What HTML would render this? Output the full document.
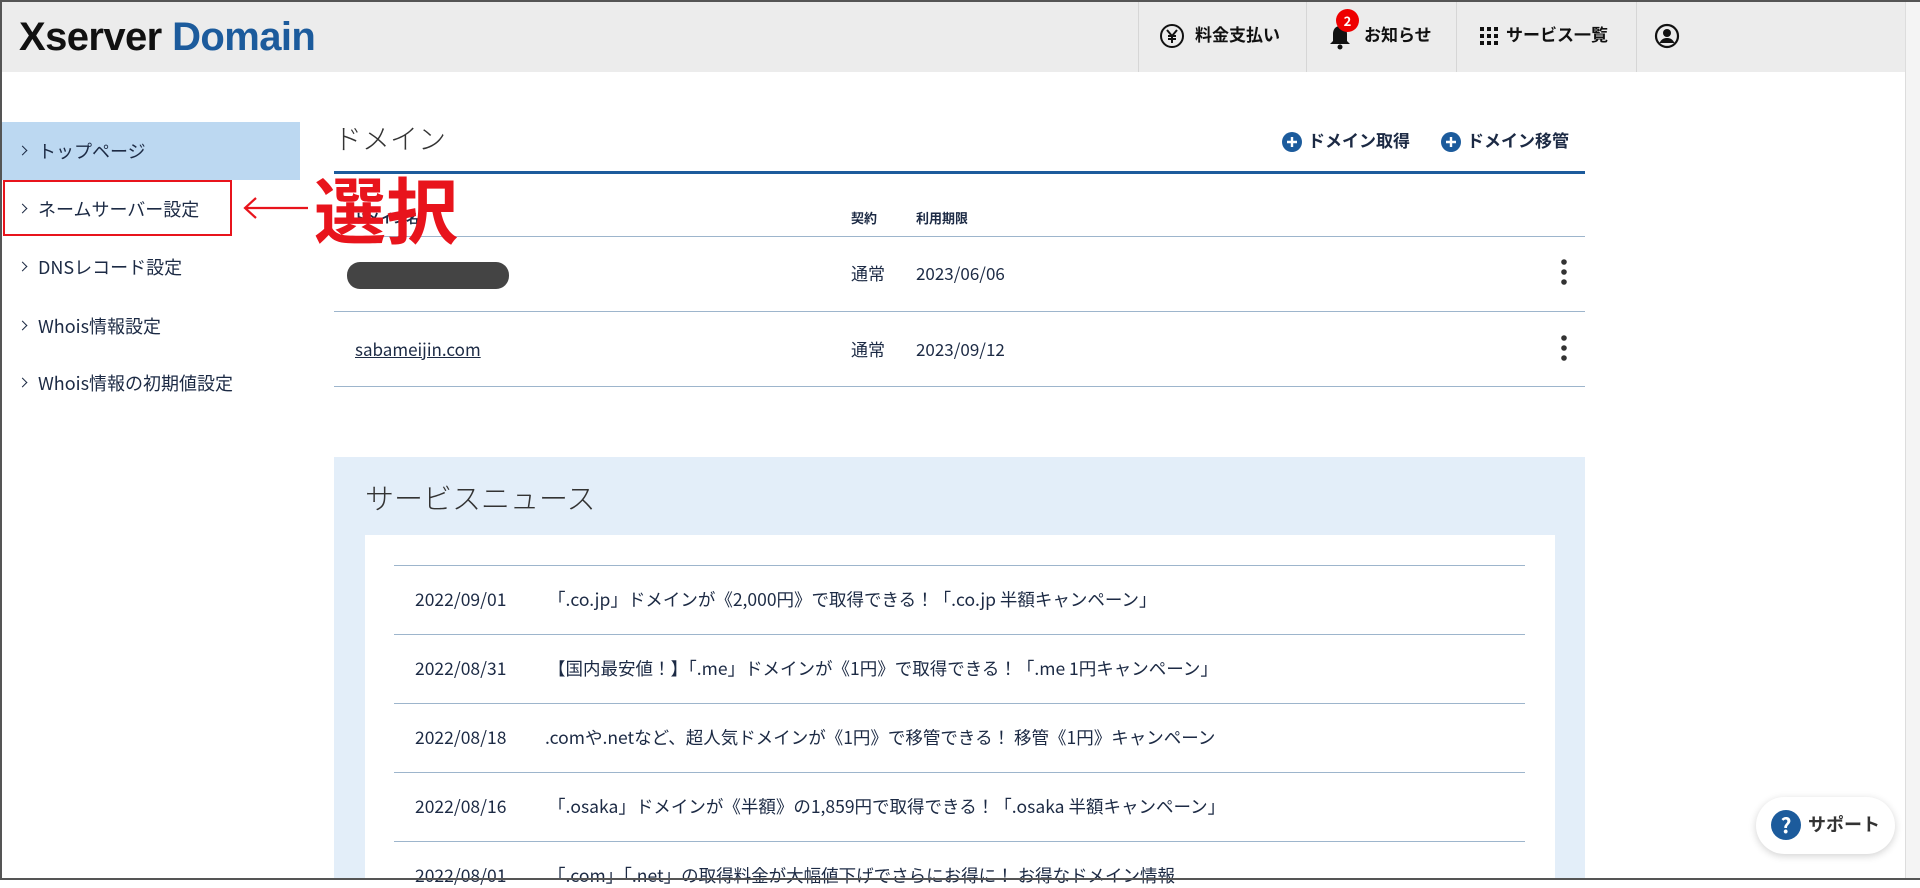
<!DOCTYPE html>
<html><head><meta charset="utf-8"><style>
*{margin:0;padding:0;box-sizing:border-box}
body{width:1920px;height:880px;overflow:hidden;background:#fff;font-family:"Noto Sans CJK JP","Liberation Sans",sans-serif;line-height:1.2;color:#1c2a44;position:relative}
.frame{position:absolute;left:0;top:0;width:1920px;height:880px;border:2px solid #555;border-right:none;pointer-events:none;z-index:50}
.hdr{position:absolute;left:0;top:0;width:1905px;height:72px;background:#ececec}
.logo{position:absolute;left:19px;top:13px;font-family:"Liberation Sans",sans-serif;font-size:40px;font-weight:bold;letter-spacing:-0.6px;color:#111;line-height:1.2}
.logo span{color:#1c5b9c}
.sep{position:absolute;top:0;width:1px;height:72px;background:#d6d6d6}
.nav{position:absolute;top:24px;font-size:17px;font-weight:bold;color:#111}
.scroll{position:absolute;left:1905px;top:0;width:15px;height:880px;background:#f4f4f4;border-left:1px solid #ddd}
.side{position:absolute;left:0;width:300px;height:58px;font-size:18px;line-height:58px;padding-left:38px;color:#1c2a44}
.side:before{content:"";position:absolute;left:19px;top:25px;width:6px;height:6px;border-right:1.5px solid #1c2a44;border-top:1.5px solid #1c2a44;transform:rotate(45deg)}
.abs{position:absolute}
.hline{position:absolute;height:1px;background:#9db5cc}
.news{position:absolute;font-size:17.5px;white-space:nowrap}
</style></head><body>
<div class="frame"></div>
<div class="hdr">
 <div class="logo">Xserver <span>Domain</span></div>
 <div class="sep" style="left:1138px"></div><div class="sep" style="left:1306px"></div><div class="sep" style="left:1456px"></div><div class="sep" style="left:1636px"></div>
 <svg class="abs" style="left:1159px;top:23px" width="26" height="26" viewBox="0 0 26 26"><circle cx="13" cy="13" r="11" fill="none" stroke="#111" stroke-width="2"/><path d="M8 7l5 6 5-6M13 13v7M9 13h8M9 16h8" stroke="#111" stroke-width="2" fill="none"/></svg>
 <div class="nav" style="left:1195px">料金支払い</div>
 <svg class="abs" style="left:1329px;top:24px" width="22" height="26" viewBox="0 0 22 26"><path d="M11 2c-5 0-7 4-7 8v7l-3 3h20l-3-3v-7c0-4-2-8-7-8z" fill="#111"/><circle cx="11" cy="23" r="2.5" fill="#111"/></svg>
 <div class="abs" style="left:1336px;top:9px;width:23px;height:23px;border-radius:50%;background:#e00;color:#fff;font-size:13px;font-weight:bold;text-align:center;line-height:23px">2</div>
 <div class="nav" style="left:1364px">お知らせ</div>
 <svg class="abs" style="left:1480px;top:27px" width="18" height="18" viewBox="0 0 18 18" fill="#111"><rect x="0" y="0" width="4" height="4"/><rect x="7" y="0" width="4" height="4"/><rect x="14" y="0" width="4" height="4"/><rect x="0" y="7" width="4" height="4"/><rect x="7" y="7" width="4" height="4"/><rect x="14" y="7" width="4" height="4"/><rect x="0" y="14" width="4" height="4"/><rect x="7" y="14" width="4" height="4"/><rect x="14" y="14" width="4" height="4"/></svg>
 <div class="nav" style="left:1506px">サービス一覧</div>
 <svg class="abs" style="left:1654px;top:23px" width="26" height="26" viewBox="0 0 26 26"><circle cx="13" cy="13" r="11" fill="none" stroke="#111" stroke-width="2.2"/><circle cx="13" cy="10" r="4" fill="#111"/><path d="M5.5 20c2-4 4.5-5 7.5-5s5.5 1 7.5 5" fill="#111"/></svg>
</div>
<div class="scroll"></div>

<div class="side" style="top:122px;background:#bcd8f1">トップページ</div>
<div class="side" style="top:180px">ネームサーバー設定</div>
<div class="side" style="top:238px">DNSレコード設定</div>
<div class="side" style="top:297px">Whois情報設定</div>
<div class="side" style="top:354px">Whois情報の初期値設定</div>
<div class="abs" style="left:3px;top:180px;width:229px;height:56px;border:2px solid #e8141c"></div>
<svg class="abs" style="left:242px;top:196px" width="66" height="24" viewBox="0 0 66 24"><path d="M66 12H4M14 2L3 12l11 10" stroke="#e8141c" stroke-width="2.2" fill="none"/></svg>
<div class="abs" style="left:314px;top:164px;font-size:72px;font-weight:bold;color:#e8141c;line-height:86px;z-index:5">選択</div>

<div class="abs" style="left:334px;top:122px;font-size:28px;color:#333;font-weight:300">ドメイン</div>
<svg class="abs" style="left:1282px;top:132px" width="20" height="20" viewBox="0 0 20 20"><circle cx="10" cy="10" r="10" fill="#1c5b9c"/><path d="M10 5v10M5 10h10" stroke="#fff" stroke-width="2.4"/></svg>
<div class="abs" style="left:1308px;top:130px;font-size:17px;font-weight:bold">ドメイン取得</div>
<svg class="abs" style="left:1441px;top:132px" width="20" height="20" viewBox="0 0 20 20"><circle cx="10" cy="10" r="10" fill="#1c5b9c"/><path d="M10 5v10M5 10h10" stroke="#fff" stroke-width="2.4"/></svg>
<div class="abs" style="left:1467px;top:130px;font-size:17px;font-weight:bold">ドメイン移管</div>
<div class="abs" style="left:334px;top:171px;width:1251px;height:3px;background:#1c5b9c"></div>
<div class="abs" style="left:354px;top:210px;font-size:13px;font-weight:bold">ドメイン名</div>
<div class="abs" style="left:851px;top:210px;font-size:13px;font-weight:bold">契約</div>
<div class="abs" style="left:916px;top:210px;font-size:13px;font-weight:bold">利用期限</div>
<div class="hline" style="left:334px;top:236px;width:1251px"></div>
<div class="abs" style="left:347px;top:262px;width:162px;height:27px;border-radius:13px;background:#444"></div>
<div class="abs" style="left:851px;top:263px;font-size:17px">通常</div>
<div class="abs" style="left:916px;top:263px;font-size:17px">2023/06/06</div>
<svg class="abs" style="left:1560px;top:258px" width="8" height="30"><circle cx="4" cy="4" r="2.8" fill="#333"/><circle cx="4" cy="14" r="2.8" fill="#333"/><circle cx="4" cy="24" r="2.8" fill="#333"/></svg>
<div class="hline" style="left:334px;top:311px;width:1251px"></div>
<div class="abs" style="left:355px;top:339px;font-size:17px;text-decoration:underline">sabameijin.com</div>
<div class="abs" style="left:851px;top:339px;font-size:17px">通常</div>
<div class="abs" style="left:916px;top:339px;font-size:17px">2023/09/12</div>
<svg class="abs" style="left:1560px;top:334px" width="8" height="30"><circle cx="4" cy="4" r="2.8" fill="#333"/><circle cx="4" cy="14" r="2.8" fill="#333"/><circle cx="4" cy="24" r="2.8" fill="#333"/></svg>
<div class="hline" style="left:334px;top:386px;width:1251px"></div>

<div class="abs" style="left:334px;top:457px;width:1251px;height:423px;background:#e3eef9"></div>
<div class="abs" style="left:365px;top:480px;font-size:29px;color:#333;font-weight:300">サービスニュース</div>
<div class="abs" style="left:365px;top:535px;width:1190px;height:345px;background:#fff"></div>
<div class="hline" style="left:394px;top:565px;width:1131px"></div>
<div class="hline" style="left:394px;top:634px;width:1131px"></div>
<div class="hline" style="left:394px;top:703px;width:1131px"></div>
<div class="hline" style="left:394px;top:772px;width:1131px"></div>
<div class="hline" style="left:394px;top:841px;width:1131px"></div>
<div class="news" style="left:415px;top:589px">2022/09/01</div><div class="news" style="left:548px;top:589px">「.co.jp」ドメインが《2,000円》で取得できる！「.co.jp 半額キャンペーン」</div>
<div class="news" style="left:415px;top:658px">2022/08/31</div><div class="news" style="left:548px;top:658px">【国内最安値！】「.me」ドメインが《1円》で取得できる！「.me 1円キャンペーン」</div>
<div class="news" style="left:415px;top:727px">2022/08/18</div><div class="news" style="left:545px;top:727px">.comや.netなど、超人気ドメインが《1円》で移管できる！ 移管《1円》キャンペーン</div>
<div class="news" style="left:415px;top:796px">2022/08/16</div><div class="news" style="left:548px;top:796px">「.osaka」ドメインが《半額》の1,859円で取得できる！「.osaka 半額キャンペーン」</div>
<div class="news" style="left:415px;top:865px">2022/08/01</div><div class="news" style="left:548px;top:865px">「.com」「.net」の取得料金が大幅値下げでさらにお得に！ お得なドメイン情報</div>

<div class="abs" style="left:1756px;top:797px;width:139px;height:57px;border-radius:29px;background:#fff;box-shadow:0 2px 8px rgba(0,0,0,.18)"></div>
<div class="abs" style="left:1771px;top:810px;width:30px;height:30px;border-radius:50%;background:#1c5b9c;color:#fff;font-weight:bold;font-size:21px;text-align:center;line-height:30px">?</div>
<div class="abs" style="left:1808px;top:814px;font-size:18px;font-weight:bold;color:#333">サポート</div>
</body></html>
